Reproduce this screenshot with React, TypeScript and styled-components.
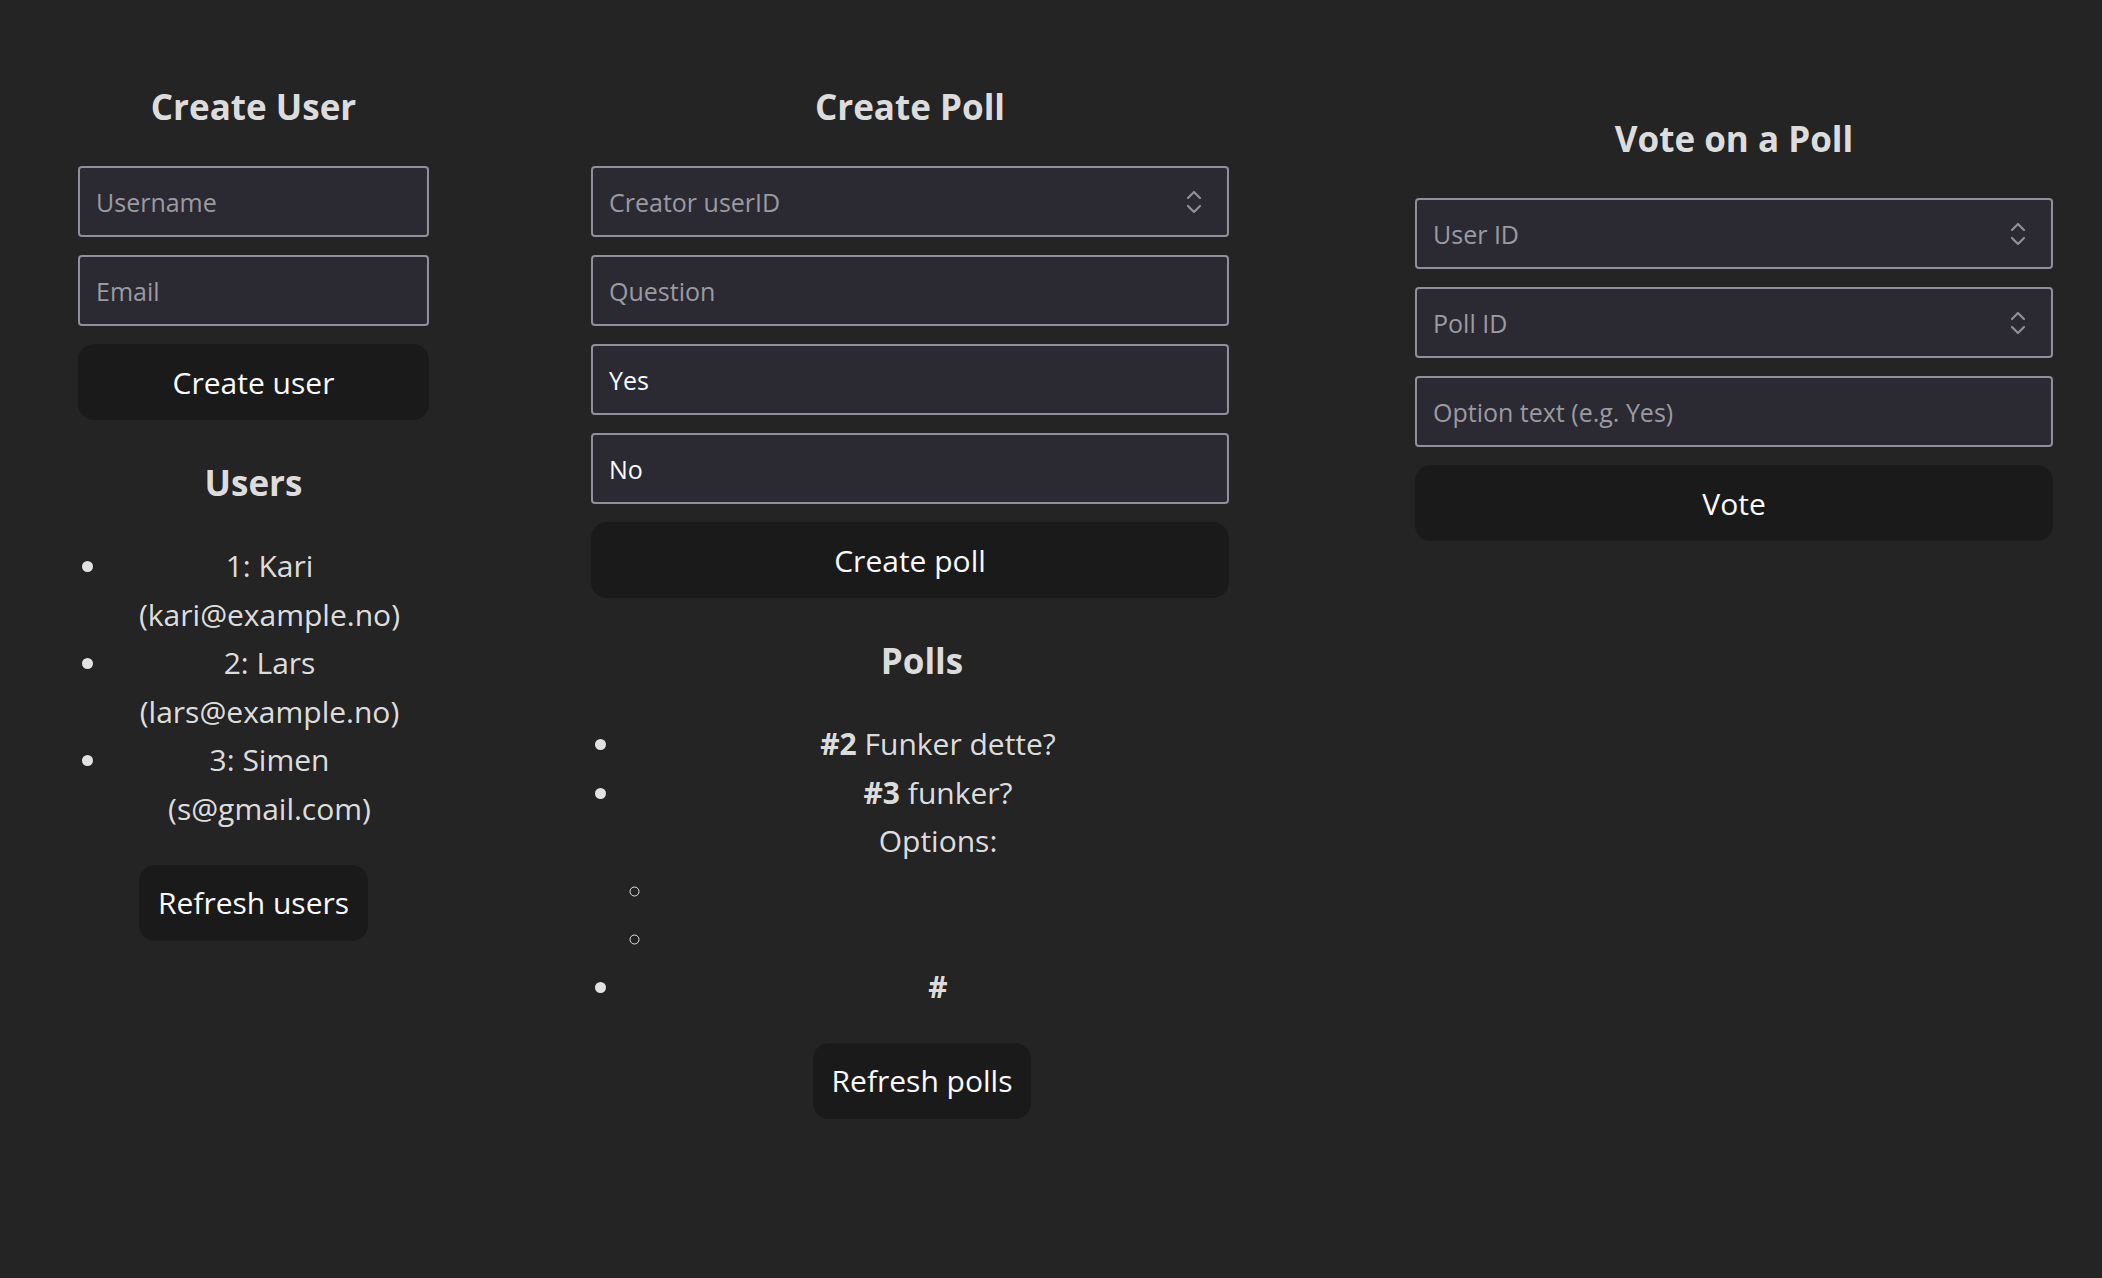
import React from "react";
import styled, { createGlobalStyle } from "styled-components";

const GlobalStyle = createGlobalStyle`
  html, body {
    margin: 0;
    padding: 0;
    background: #242424;
  }
  body {
    font-family: "Open Sans", "Noto Sans", "Liberation Sans", sans-serif;
    color: rgba(255, 255, 255, 0.87);
  }
  * {
    box-sizing: border-box;
  }
`;

const Page = styled.div`
  display: flex;
  align-items: flex-start;
  gap: 162px;
  min-height: 100vh;
  padding: 79px 48px 0 78px;
`;

const Column = styled.div<{ $top?: number }>`
  display: flex;
  flex-direction: column;
  align-items: flex-start;
  padding-top: ${(p) => p.$top ?? 0}px;
`;

const Section = styled.section<{ $width: number; $gap?: number }>`
  display: flex;
  flex-direction: column;
  align-items: center;
  width: ${(p) => p.$width}px;
  margin-top: ${(p) => p.$gap ?? 0}px;
`;

const Heading = styled.h3`
  margin: 0 0 31px;
  font-size: 35px;
  line-height: 56px;
  font-weight: 700;
  text-align: center;
`;

const Form = styled.form`
  display: flex;
  flex-direction: column;
  gap: 18px;
  width: 100%;
`;

const Field = styled.label`
  display: flex;
  align-items: center;
  height: 71px;
  padding: 0 16px;
  border: 2px solid #8f8f9d;
  border-radius: 4px;
  background: #2b2a33;
`;

const Input = styled.input`
  flex: 1;
  min-width: 0;
  border: none;
  outline: none;
  background: transparent;
  padding: 0;
  color: #fbfbfe;
  font-family: "Open Sans", "Noto Sans", sans-serif;
  font-size: 25px;

  &::placeholder {
    color: #9b9aa1;
    opacity: 1;
  }
`;

const Spinner = styled.svg`
  width: 16px;
  height: 24px;
  margin-right: 9px;
  flex: none;
`;

const Button = styled.button<{ $full?: boolean; $gap?: number }>`
  height: 76px;
  width: ${(p) => (p.$full ? "100%" : "auto")};
  margin-top: ${(p) => p.$gap ?? 0}px;
  padding: 0 17px;
  border: 2px solid transparent;
  border-radius: 16px;
  background: #1a1a1a;
  color: #fbfbfe;
  font-family: "Open Sans", "Noto Sans", sans-serif;
  font-size: 30px;
  cursor: pointer;
`;

const List = styled.ul`
  align-self: stretch;
  margin: 0;
  padding-left: 32px;
  font-size: 30px;
  line-height: 48.6px;
  list-style: disc;
`;

const Item = styled.li`
  text-align: center;
`;

const SubList = styled.ul`
  margin: 0;
  padding-left: 32px;
  list-style: circle;
`;

const SubItem = styled.li`
  min-height: 48.6px;
  font-size: 26px;
`;

function NumberField({ placeholder }: { placeholder: string }) {
  return (
    <Field>
      <Input type="text" placeholder={placeholder} />
      <Spinner viewBox="0 0 16 24" fill="none" stroke="#8f8f9d" strokeWidth="2.2" strokeLinecap="round" strokeLinejoin="round">
        <polyline points="2,8 8,2 14,8" />
        <polyline points="2,16 8,22 14,16" />
      </Spinner>
    </Field>
  );
}

function TextField({ placeholder, value }: { placeholder?: string; value?: string }) {
  return (
    <Field>
      <Input type="text" placeholder={placeholder} defaultValue={value} />
    </Field>
  );
}

const users = [
  { id: 1, name: "Kari", email: "kari@example.no" },
  { id: 2, name: "Lars", email: "lars@example.no" },
  { id: 3, name: "Simen", email: "s@gmail.com" },
];

export default function App() {
  return (
    <>
      <GlobalStyle />
      <Page>
        <Column>
          <Section $width={351}>
            <Heading>Create User</Heading>
            <Form onSubmit={(e) => e.preventDefault()}>
              <TextField placeholder="Username" />
              <TextField placeholder="Email" />
              <Button $full type="submit">Create user</Button>
            </Form>
          </Section>
          <Section $width={351} $gap={35}>
            <Heading>Users</Heading>
            <List>
              {users.map((u) => (
                <Item key={u.id}>
                  {u.id}: {u.name} ({u.email})
                </Item>
              ))}
            </List>
            <Button $gap={31}>Refresh users</Button>
          </Section>
        </Column>

        <Column>
          <Section $width={638}>
            <Heading>Create Poll</Heading>
            <Form onSubmit={(e) => e.preventDefault()}>
              <NumberField placeholder="Creator userID" />
              <TextField placeholder="Question" />
              <TextField value="Yes" />
              <TextField value="No" />
              <Button $full type="submit">Create poll</Button>
            </Form>
          </Section>
          <Section $width={662} $gap={35}>
            <Heading>Polls</Heading>
            <List>
              <Item>
                <strong>#2</strong> Funker dette?
              </Item>
              <Item>
                <strong>#3</strong> funker?
                <div>Options:</div>
                <SubList>
                  <SubItem />
                  <SubItem />
                </SubList>
              </Item>
              <Item>
                <strong>#</strong>
              </Item>
            </List>
            <Button $gap={31}>Refresh polls</Button>
          </Section>
        </Column>

        <Column $top={32}>
          <Section $width={638}>
            <Heading>Vote on a Poll</Heading>
            <Form onSubmit={(e) => e.preventDefault()}>
              <NumberField placeholder="User ID" />
              <NumberField placeholder="Poll ID" />
              <TextField placeholder="Option text (e.g. Yes)" />
              <Button $full type="submit">Vote</Button>
            </Form>
          </Section>
        </Column>
      </Page>
    </>
  );
}
